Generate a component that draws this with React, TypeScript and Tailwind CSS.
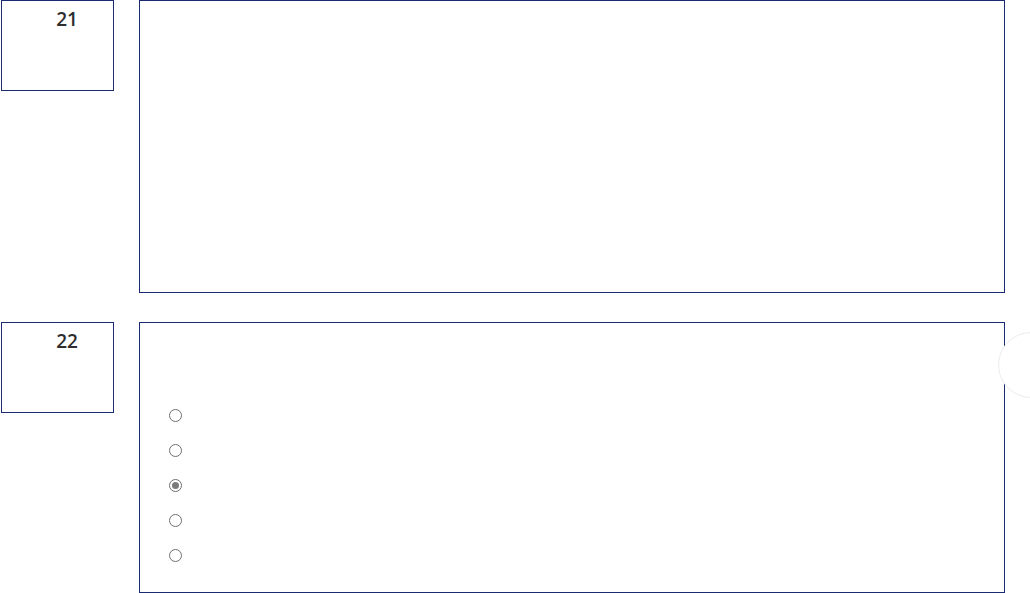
import React from 'react';

const Question: React.FC<{ num: number; height: string; children?: React.ReactNode }> = ({ num, height, children }) => (
  <div className="flex items-start">
    <div className="w-[113px] h-[91px] ml-[1px] border border-[#1b2b72] flex justify-center pt-[6px]">
      <span className="text-[19px] leading-6 font-semibold text-[#2e2e2e] pl-[19px]">{num}</span>
    </div>
    <div className={`ml-[25px] w-[866px] ${height} border border-[#1b2b72] bg-white`}>{children}</div>
  </div>
);

export default function App() {
  const options = [false, false, true, false, false];
  return (
    <div className="relative w-[1030px] h-[593px] overflow-hidden bg-white" style={{ fontFamily: '"Open Sans", "Noto Sans", sans-serif' }}>
      <div className="flex flex-col gap-[29px]">
        <Question num={21} height="h-[293px]" />
        <Question num={22} height="h-[271px]">
          <div className="flex flex-col gap-[22px] pt-[86px] pl-[29px]">
            {options.map((checked, i) => (
              <div key={i} className="w-[13px] h-[13px] rounded-full border border-[#6f6f6f] bg-white flex items-center justify-center">
                {checked && <div className="w-[7px] h-[7px] rounded-full bg-[#7a7a7a]" />}
              </div>
            ))}
          </div>
        </Question>
      </div>
      {/* floating button, mostly off screen */}
      <div className="absolute left-[998px] top-[332px] w-[66px] h-[66px] rounded-full border border-[#ececec] bg-white" />
    </div>
  );
}
